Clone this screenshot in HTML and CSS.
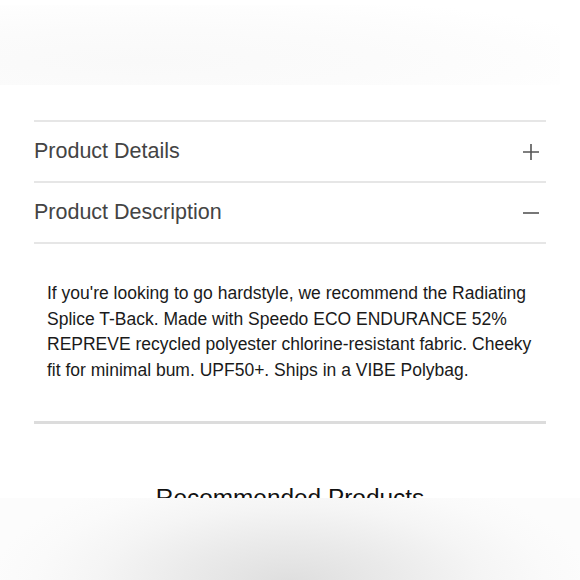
FILE: index.html
```html
<!DOCTYPE html>
<html lang="en">

<head>
    <meta charset="UTF-8">
    <meta name="viewport" content="width=device-width, initial-scale=1.0">
    <title>Product Info</title>
    <link rel="stylesheet" href="styles.css">
</head>

<body>
    <div class="hero"><div class="hero-shape"></div></div>

    <div class="accordion">
        <div class="acc-item">
            <div class="acc-header">
                <span class="acc-title">Product Details</span>
                <svg class="acc-icon" width="18" height="18" viewBox="0 0 18 18">
                    <path d="M1 9h16M9 1v16" stroke="#555" stroke-width="1.6" fill="none"/>
                </svg>
            </div>
        </div>
        <div class="acc-item open">
            <div class="acc-header">
                <span class="acc-title">Product Description</span>
                <svg class="acc-icon" width="18" height="18" viewBox="0 0 18 18">
                    <path d="M1 9h16" stroke="#555" stroke-width="1.6" fill="none"/>
                </svg>
            </div>
            <div class="acc-body">
                <p>If you're looking to go hardstyle, we recommend the Radiating Splice T-Back. Made with Speedo ECO ENDURANCE 52% REPREVE recycled polyester chlorine-resistant fabric. Cheeky fit for minimal bum. UPF50+. Ships in a VIBE Polybag.</p>
            </div>
        </div>
    </div>

    <h2 class="rec-title">Recommended Products</h2>

    <div class="fade-overlay"></div>
</body>

</html>
```

FILE: styles.css
```css
body {
    font-family: "Liberation Sans", Arial, sans-serif;
    margin: 0;
    padding: 0;
    background-color: #fff;
    height: 580px;
    overflow: hidden;
    position: relative;
}

.hero {
    height: 120px;
    position: relative;
}

.hero-shape {
    position: absolute;
    left: 0;
    top: 5px;
    width: 560px;
    height: 80px;
    background: radial-gradient(ellipse at 25% 70%, #f9f9f9 0%, #fbfbfb 40%, #fdfdfd 65%, #fff 85%);
}

.accordion {
    margin: 0 34px;
    position: relative;
}

.acc-item {
    border-top: 2px solid #e6e6e6;
}

.acc-item.open {
    border-bottom: 3px solid #dcdcdc;
}

.acc-header {
    height: 59px;
    display: flex;
    align-items: center;
    justify-content: space-between;
    padding-right: 6px;
}

.acc-title {
    font-size: 21.5px;
    color: #444;
}

.acc-body {
    border-top: 2px solid #e6e6e6;
    padding: 37px 10px 38px 13px;
}

.acc-body p {
    margin: 0;
    font-size: 17.5px;
    line-height: 25.5px;
    color: #1a1a1a;
}

.rec-title {
    margin: 60px 0 0 0;
    text-align: center;
    font-size: 24.4px;
    font-weight: normal;
    color: #111;
}

.fade-overlay {
    position: absolute;
    left: 0;
    right: 0;
    top: 498px;
    bottom: 0;
    background: radial-gradient(ellipse 300px 120px at 50% 105%, #dedede 0%, #eaeaea 35%, #f5f5f5 65%, #fafafa 85%, #fcfcfc 100%);
}
```
